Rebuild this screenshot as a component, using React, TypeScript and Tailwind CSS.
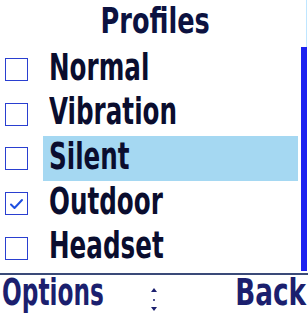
import { useState } from "react";

interface Profile {
  name: string;
  active: boolean;
}

const profiles: Profile[] = [
  { name: "Normal", active: false },
  { name: "Vibration", active: false },
  { name: "Silent", active: false },
  { name: "Outdoor", active: true },
  { name: "Headset", active: false },
];

const font = { fontFamily: '"DejaVu Sans Condensed", "DejaVu Sans", sans-serif' };

function CheckBox({ checked }: { checked: boolean }) {
  return (
    <div className="flex h-[23px] w-[23px] items-center justify-center border-[1.5px] border-[#2a3fd0] bg-white">
      {checked && (
        <svg width="15" height="12" viewBox="0 0 15 12" fill="none">
          <path d="M2 6.5 L5.5 10 L13 2" stroke="#1f4fe0" strokeWidth="2" strokeLinecap="round" strokeLinejoin="round" />
        </svg>
      )}
    </div>
  );
}

export default function App() {
  const [selected] = useState(2);

  return (
    <div className="relative flex h-[320px] w-[308px] flex-col overflow-hidden bg-white" style={font}>
      {/* scrollbar */}
      <div className="absolute right-[1px] top-0 h-[47px] w-[1px] bg-[#bfe6ff]" />
      <div className="absolute right-[1px] top-[47px] h-[224px] w-[6px] bg-[#1d22f0]" />

      <div className="flex h-[47px] shrink-0 items-start justify-center pl-[2px] pt-[3px]">
        <span className="inline-block origin-center scale-x-[0.79] text-[36px] font-bold leading-none text-[#0c1240]">
          Profiles
        </span>
      </div>

      <div className="flex shrink-0 flex-col">
        {profiles.map((p, i) => (
          <div key={p.name} className="flex h-[44.6px] items-center">
            <div className="flex w-[43px] items-center pl-[5px] pt-[1px]">
              <CheckBox checked={p.active} />
            </div>
            <div
              className={
                i === selected
                  ? "flex h-full w-[255px] items-center bg-[#a5d8f2] pl-[6px] pb-[5px]"
                  : "flex h-full w-[255px] items-center pl-[6px] pb-[5px]"
              }
            >
              <span className="inline-block origin-left scale-x-[0.72] text-[38px] font-bold leading-none text-[#0a0d2e]">
                {p.name}
              </span>
            </div>
          </div>
        ))}
      </div>

      <div className="mt-[3px] h-[2px] w-full shrink-0 bg-[#3a4a78]" />

      <div className="flex min-h-0 flex-1 items-start pt-[2px]">
        <div className="w-[150px] pl-[2px]">
          <span className="inline-block origin-left scale-x-[0.68] text-[38px] font-bold leading-[30px] text-[#1b1f6e]">
            Options
          </span>
        </div>
        <svg width="8" height="26" viewBox="0 0 8 26" className="mt-[10px]">
          <path d="M4 1 L7 5 L1 5 Z" fill="#1b1f6e" />
          <circle cx="4" cy="13" r="1" fill="#1b1f6e" />
          <path d="M1 20 L7 20 L4 24 Z" fill="#1b1f6e" />
        </svg>
        <div className="flex flex-1 justify-end pr-[2px]">
          <span className="inline-block origin-right scale-x-[0.77] text-[38px] font-bold leading-[30px] text-[#1b1f6e]">
            Back
          </span>
        </div>
      </div>
    </div>
  );
}
